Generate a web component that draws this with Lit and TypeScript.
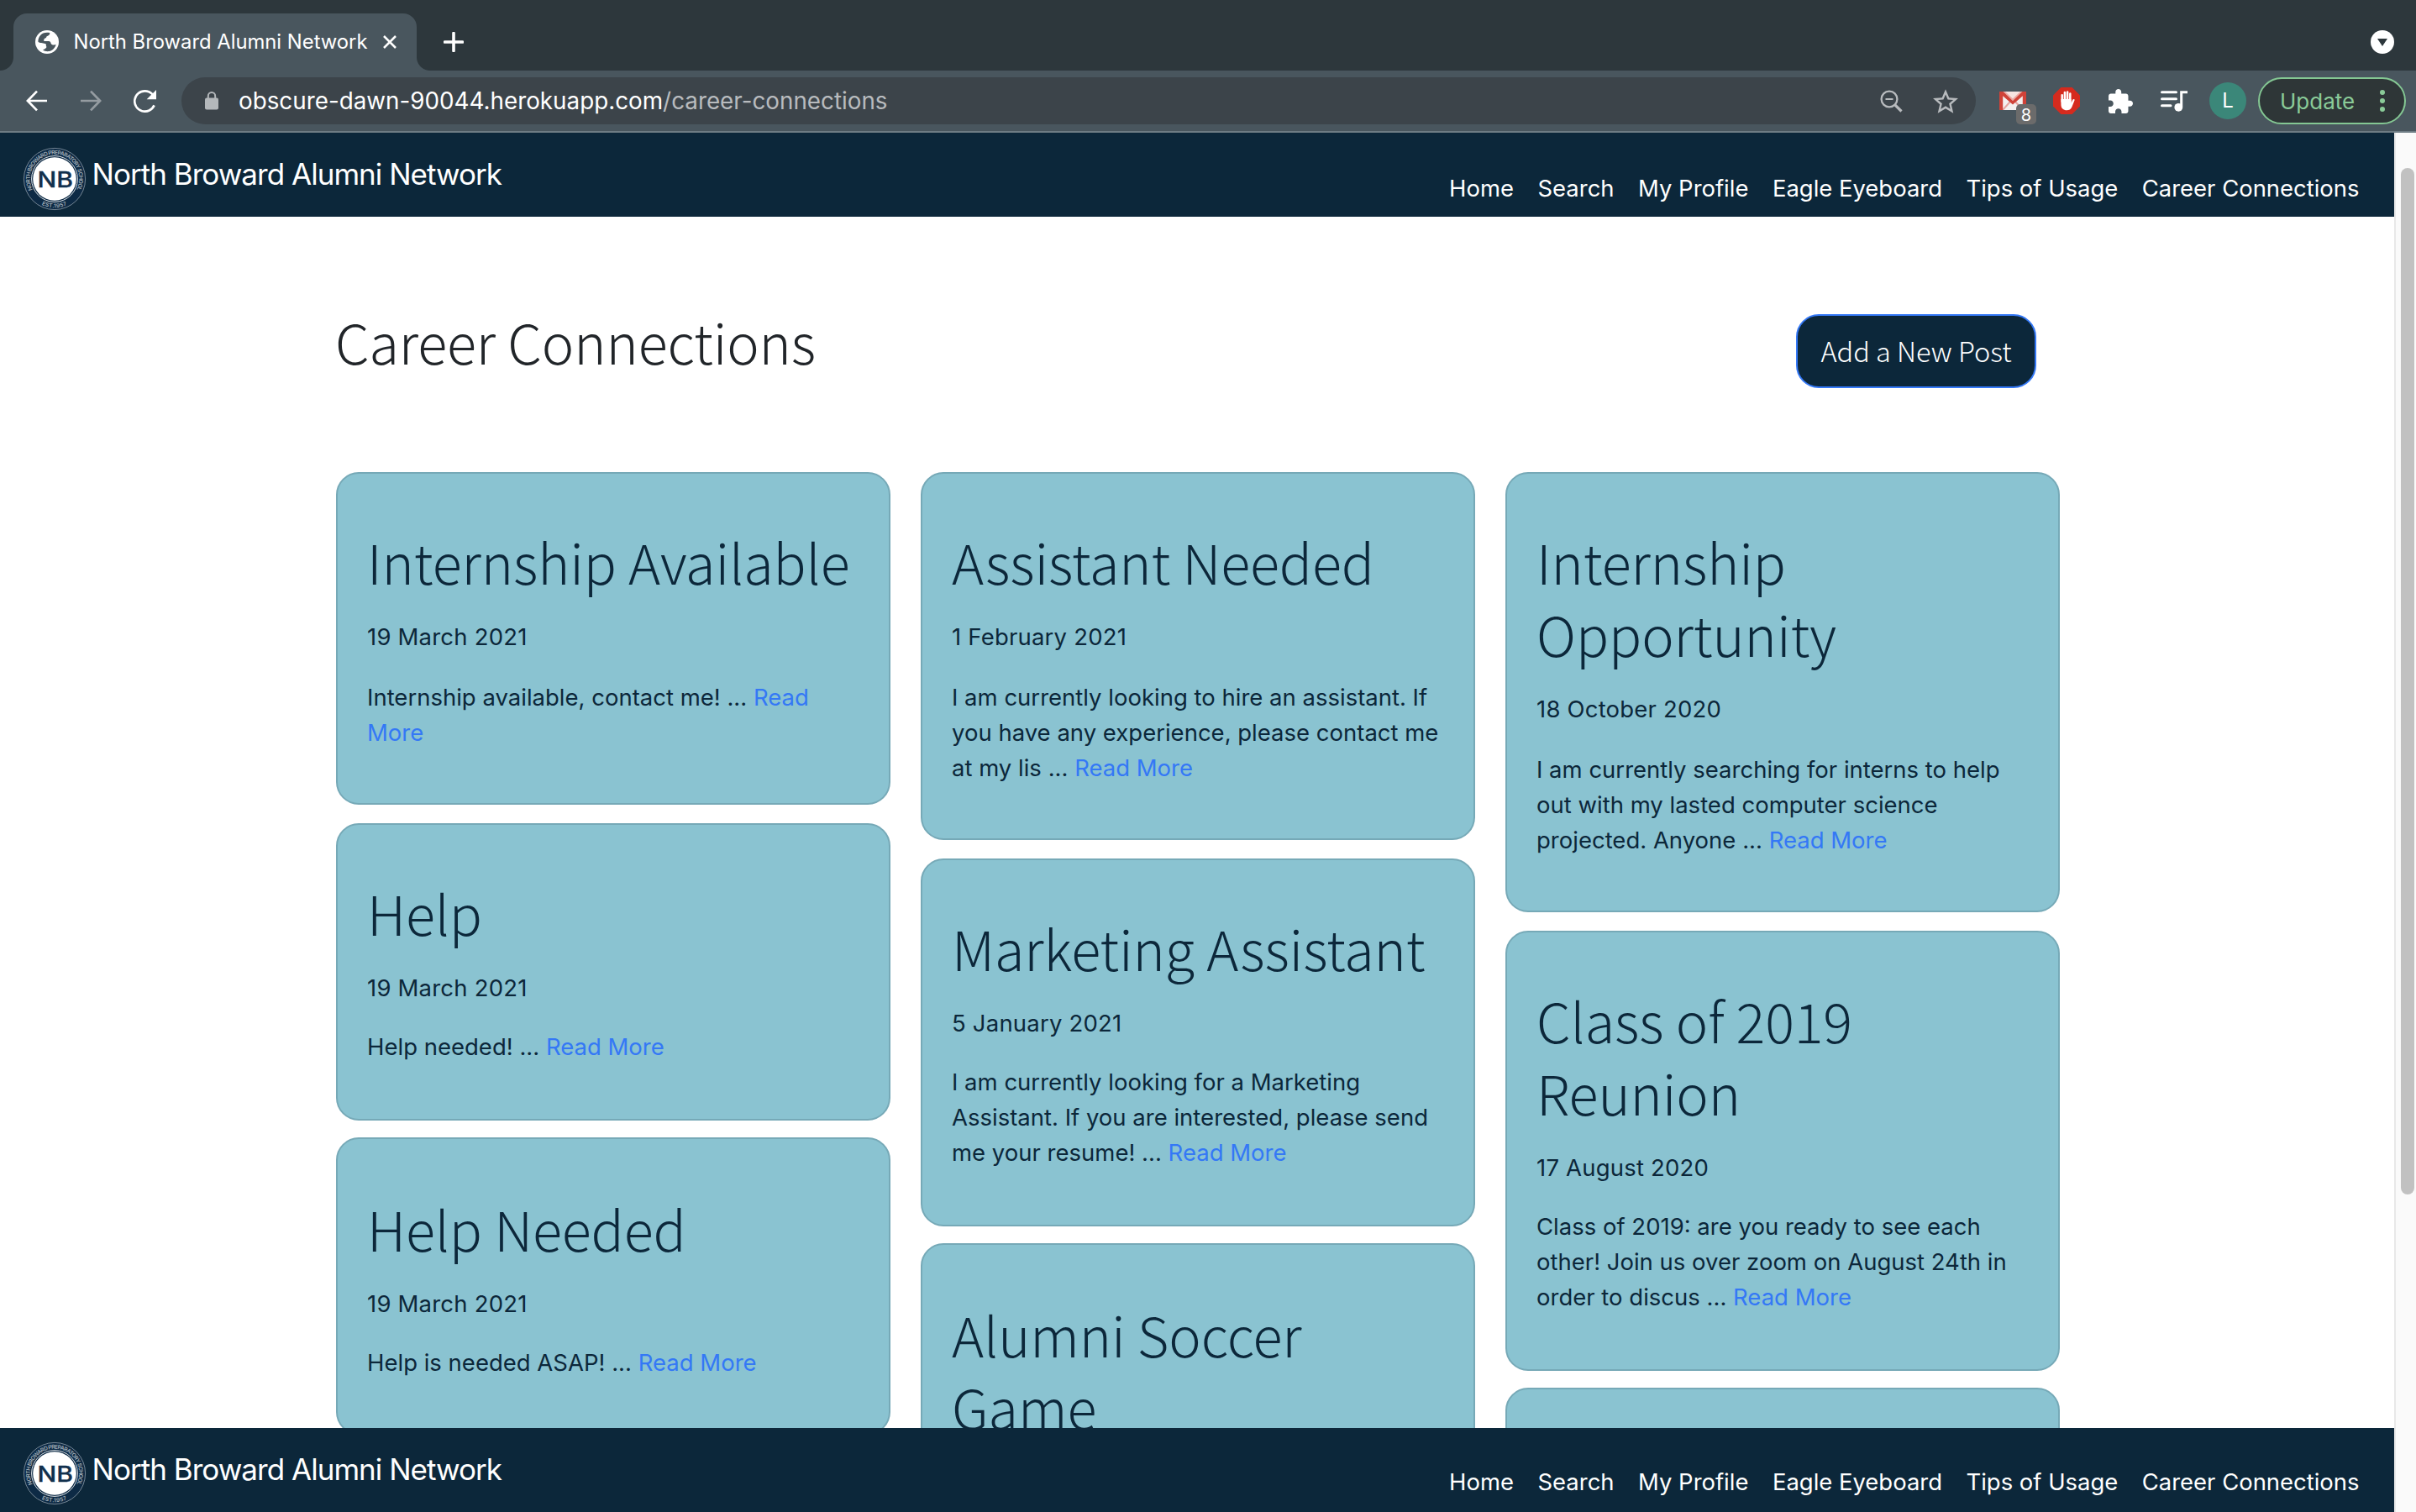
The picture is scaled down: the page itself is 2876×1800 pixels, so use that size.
import { LitElement, html, css, svg, nothing } from "lit";
import { customElement, property } from "lit/decorators.js";

interface Post {
  title: string;
  date?: string;
  excerpt?: string;
}

const SITE_NAME = "North Broward Alumni Network";

const NAV_LINKS = ["Home", "Search", "My Profile", "Eagle Eyeboard", "Tips of Usage", "Career Connections"];

const COLUMNS: Post[][] = [
  [
    { title: "Internship Available", date: "19 March 2021", excerpt: "Internship available, contact me!" },
    { title: "Help", date: "19 March 2021", excerpt: "Help needed!" },
    { title: "Help Needed", date: "19 March 2021", excerpt: "Help is needed ASAP!" },
  ],
  [
    {
      title: "Assistant Needed",
      date: "1 February 2021",
      excerpt: "I am currently looking to hire an assistant. If you have any experience, please contact me at my lis",
    },
    {
      title: "Marketing Assistant",
      date: "5 January 2021",
      excerpt: "I am currently looking for a Marketing Assistant. If you are interested, please send me your resume!",
    },
    { title: "Alumni Soccer Game" },
  ],
  [
    {
      title: "Internship Opportunity",
      date: "18 October 2020",
      excerpt: "I am currently searching for interns to help out with my lasted computer science projected. Anyone",
    },
    {
      title: "Class of 2019 Reunion",
      date: "17 August 2020",
      excerpt: "Class of 2019: are you ready to see each other! Join us over zoom on August 24th in order to discus",
    },
    { title: "" },
  ],
];

@customElement("school-seal")
export class SchoolSeal extends LitElement {
  static styles = css`
    :host {
      display: block;
      width: 76px;
      height: 76px;
    }
    svg {
      display: block;
    }
    .ring-text {
      font: 600 6.6px Inter, "Liberation Sans", sans-serif;
      fill: #a3afb9;
    }
    .initials {
      font: 500 25.5px Inter, "Liberation Sans", sans-serif;
      fill: #12304d;
      stroke: #12304d;
      stroke-width: 0.3px;
    }
  `;

  render() {
    return html`<svg width="76" height="76" viewBox="-38 -38 76 76">
      <defs>
        <path id="upper" d="M-26.2 12.8A29.2 29.2 0 1 1 26.2 12.8" />
        <path id="lower" d="M-15.5 30.6A34.3 34.3 0 0 0 15.5 30.6" />
      </defs>
      <circle r="36.6" fill="#0d2a45" stroke="#7f8f9c" stroke-width="0.9" />
      <text class="ring-text">
        <textPath href="#upper" textLength="118">NORTH BROWARD PREPARATORY SCHOOL</textPath>
      </text>
      <text class="ring-text">
        <textPath href="#lower" textLength="31">EST.1957</textPath>
      </text>
      <circle r="27.4" fill="none" stroke="#dfe4e8" stroke-width="1" />
      <circle r="25.8" fill="#fff" />
      <text class="initials" x="-20.6" y="9.6" textLength="42.5" lengthAdjust="spacingAndGlyphs">NB</text>
    </svg>`;
  }
}

@customElement("site-bar")
export class SiteBar extends LitElement {
  static styles = css`
    :host {
      display: flex;
      box-sizing: border-box;
      height: 100px;
      flex: none;
      padding: 0 41.5px 0 27px;
      background: #0c273a;
      color: #fff;
      font-family: Inter, "Liberation Sans", sans-serif;
    }
    .seal {
      margin-top: 17px;
    }
    :host([placement="bottom"]) .seal {
      margin-top: 16px;
    }
    .brand {
      margin: 24px auto 0 6.5px;
      font-size: 35px;
      line-height: 50px;
      letter-spacing: -0.97px;
      white-space: nowrap;
    }
    .links {
      display: flex;
      gap: 28.5px;
      margin-top: 45px;
      font-size: 27.45px;
      line-height: 42px;
      white-space: nowrap;
    }
    :host([placement="bottom"]) .links {
      margin-top: 43px;
    }
  `;

  @property({ reflect: true }) placement = "top";

  render() {
    return html`
      <school-seal class="seal"></school-seal>
      <span class="brand">${SITE_NAME}</span>
      <nav class="links">${NAV_LINKS.map((link) => html`<span>${link}</span>`)}</nav>
    `;
  }
}

@customElement("post-card")
export class PostCard extends LitElement {
  static styles = css`
    :host {
      display: block;
      box-sizing: border-box;
      width: 660px;
      min-height: 354px;
      padding: 61px 33px 63px 35px;
      border: 2px solid #76a9b7;
      border-radius: 27px;
      background: #8ac3d1;
      color: #0c273a;
    }
    .title {
      margin: 0;
      min-height: 86px;
      font: 300 64.8px/86px "Noto Sans CJK JP", "Noto Sans", sans-serif;
      letter-spacing: -0.08px;
    }
    .date,
    .text {
      margin: 26px 0 0;
      font: 27.5px/42px Inter, "Liberation Sans", sans-serif;
    }
    .date {
      letter-spacing: 0.2px;
    }
    .text {
      margin-top: var(--text-gap, 30px);
    }
    .more {
      color: #3478f6;
    }
  `;

  @property({ attribute: false }) post!: Post;

  render() {
    const { title, date, excerpt } = this.post;
    return html`
      ${title ? html`<h2 class="title">${title}</h2>` : nothing}
      ${date ? html`<p class="date">${date}</p>` : nothing}
      ${excerpt ? html`<p class="text">${excerpt} ... <span class="more">Read More</span></p>` : nothing}
    `;
  }
}

const arrow = svg`<path d="M25 13H2.4M13 1.6 1.9 13 13 24.4" fill="none" stroke="currentColor" stroke-width="2.7" />`;

@customElement("browser-chrome")
export class BrowserChrome extends LitElement {
  static styles = css`
    :host {
      display: block;
      flex: none;
      color: #fff;
      font-family: Inter, "Liberation Sans", sans-serif;
    }
    svg {
      display: block;
      flex: none;
    }
    .strip {
      display: flex;
      align-items: flex-start;
      box-sizing: border-box;
      height: 84px;
      padding: 16px 26px 0 16px;
      background: #2d373c;
    }
    .tab {
      position: relative;
      display: flex;
      align-items: center;
      box-sizing: border-box;
      width: 480px;
      height: 68px;
      padding: 0 24px 0 26px;
      border-radius: 16px 16px 0 0;
      background: #49565e;
    }
    .tab::before,
    .tab::after {
      content: "";
      position: absolute;
      bottom: 0;
      width: 16px;
      height: 16px;
    }
    .tab::before {
      right: 100%;
      background: radial-gradient(circle at 0 0, transparent 15.5px, #49565e 16.5px);
    }
    .tab::after {
      left: 100%;
      background: radial-gradient(circle at 100% 0, transparent 15.5px, #49565e 16.5px);
    }
    .tab-title {
      margin: 0 auto 0 17.5px;
      font-size: 23.8px;
      line-height: 30px;
      white-space: nowrap;
    }
    .plus {
      margin: 22px auto 0 32px;
    }
    .menu {
      margin-top: 20px;
    }
    .toolbar {
      display: flex;
      align-items: center;
      box-sizing: border-box;
      height: 74px;
      padding: 0 11px 0 31px;
      border-bottom: 2px solid #6e7c84;
      background: #49565e;
    }
    .forward {
      margin-left: 38px;
      transform: scaleX(-1);
      color: #959ca1;
    }
    .reload {
      margin-left: 38px;
    }
    .address {
      display: flex;
      align-items: center;
      box-sizing: border-box;
      width: 2136px;
      height: 56px;
      margin-left: 30px;
      padding: 0 21px 0 28px;
      border-radius: 28px;
      background: #3c444a;
      color: #b8bbbe;
    }
    .url {
      margin: 0 auto 0 24px;
      font-size: 27.8px;
      line-height: 40px;
      white-space: nowrap;
    }
    .host {
      color: #fff;
    }
    .star {
      margin-left: 36px;
    }
    .mail {
      position: relative;
      margin-left: 28px;
    }
    .count {
      position: absolute;
      left: 20px;
      top: 15px;
      width: 24px;
      height: 24px;
      border-radius: 5px;
      background: #6b6b6b;
      font-size: 20px;
      line-height: 26px;
      text-align: center;
    }
    .blocker {
      margin-left: 32px;
    }
    .puzzle {
      margin-left: 34px;
    }
    .queue {
      margin-left: 33px;
    }
    .avatar {
      width: 44px;
      height: 44px;
      margin-left: 26px;
      border-radius: 50%;
      background: #3b8779;
      font-size: 24px;
      line-height: 44px;
      text-align: center;
    }
    .update {
      display: flex;
      align-items: center;
      justify-content: space-between;
      box-sizing: border-box;
      width: 176px;
      height: 56px;
      margin-left: 14px;
      padding: 0 23px 0 24px;
      border: 2px solid #84c793;
      border-radius: 28px;
      background: #2e3637;
      color: #8acb98;
      font-size: 26px;
    }
  `;

  render() {
    return html`
      <div class="strip">
        <div class="tab">
          <svg width="28" height="28" viewBox="0 0 28 28">
            <circle cx="14" cy="14" r="14" fill="#fff" />
            <path
              d="M9.5 3.6C11.500 2.700 14.500 2.500 17.200 3.100 17.800 5 16.200 6.700 13.600 7.300 13.200 8.900 12.500 9.500 10.800 10 10.200 11 10.300 12 10.300 13H16C17.800 13.200 18.500 14.300 18.700 16 20 17.600 22.500 17.900 24.600 17 23.700 21 20.500 24.300 16.500 25.100 13.500 25.500 11 24.800 9 23.600 11 22.500 12.800 21.500 13.600 19.700 12 19.300 13.700 17.500 12.600 16.600 10.500 14.800 6.500 16 3.500 14 3.100 9.500 5.600 5.500 9.500 3.600Z"
              fill="#49565e"
            />
          </svg>
          <span class="tab-title">${SITE_NAME}</span>
          <svg width="16" height="16" viewBox="0 0 16 16">
            <path d="M1 1 15 15M15 1 1 15" stroke="#fff" stroke-width="2.5" />
          </svg>
        </div>
        <svg class="plus" width="24" height="24" viewBox="0 0 24 24">
          <path d="M12 1.500V22.500M1.500 12H22.500" stroke="#fff" stroke-width="3.600" stroke-linecap="round" />
        </svg>
        <svg class="menu" width="28" height="28" viewBox="0 0 28 28">
          <circle cx="14" cy="14" r="14" fill="#fff" />
          <path d="M8 10H20L14 19Z" fill="#2d373c" />
        </svg>
      </div>
      <div class="toolbar">
        <svg width="26" height="26" viewBox="0 0 26 26">${arrow}</svg>
        <svg class="forward" width="26" height="26" viewBox="0 0 26 26">${arrow}</svg>
        <svg class="reload" width="27" height="27" viewBox="4 4 16 16" fill="#fff">
          <path
            d="M17.650 6.350A7.960 7.960 0 0 0 12 4a8 8 0 1 0 7.300 11.200l-1.500-.7A6.400 6.400 0 1 1 12 5.600c1.760 0 3.340.72 4.500 1.880L13.300 10.600H20V4z"
          />
        </svg>
        <div class="address">
          <svg width="16" height="22" viewBox="0 0 16 22">
            <rect x="0" y="7.500" width="16" height="14" rx="2" fill="#b4b8bb" />
            <path d="M3.800 8.500V5.300a4.200 4.200 0 0 1 8.400 0V8.500" fill="none" stroke="#b4b8bb" stroke-width="2" />
          </svg>
          <span class="url"><span class="host">obscure-dawn-90044.herokuapp.com</span>/career-connections</span>
          <svg width="27" height="27" viewBox="0 0 27 27" fill="none" stroke="currentColor">
            <circle cx="11" cy="11" r="9.400" stroke-width="2.300" />
            <path d="M6.500 11H15.500" stroke-width="2" />
            <path d="M17.800 17.800 25.500 25.500" stroke-width="3.200" />
          </svg>
          <svg class="star" width="30" height="29" viewBox="2 2 20 19" fill="currentColor">
            <path
              d="M22 9.240l-7.190-.62L12 2 9.190 8.630 2 9.240l5.460 4.730L5.820 21 12 17.270 18.180 21l-1.630-7.030L22 9.240zM12 15.400l-3.760 2.270 1-4.280-3.320-2.880 4.380-.38L12 6.100l1.710 4.040 4.380.38-3.320 2.880 1 4.280L12 15.400z"
            />
          </svg>
        </div>
        <div class="mail">
          <svg width="32" height="22" viewBox="0 0 32 22">
            <rect width="32" height="22" rx="1" fill="#f4f0ef" />
            <path d="M4 22 13 12M28 22 19 12" stroke="#e6a5a0" stroke-width="2" />
            <path d="M4 0H28L16 11Z" fill="#eda9a4" />
            <path d="M7 0H25L16 8.500Z" fill="#f7e3e1" />
            <path d="M0 0H4.500L16 11 27.500 0H32V22H27.800V5.200L16 15.500 4.200 5.200V22H0Z" fill="#d04238" />
          </svg>
          <span class="count">8</span>
        </div>
        <svg class="blocker" width="32" height="32" viewBox="0 0 32 32">
          <path d="M9.400 0H22.600L32 9.400V22.600L22.600 32H9.400L0 22.600V9.400Z" fill="#d52b1e" />
          <g stroke="#fff" stroke-width="2.500" stroke-linecap="round">
            <path d="M10.700 17V9.300M13.900 16V6M17.100 16V5.500M20.300 17V7.500" />
          </g>
          <path
            d="M9.450 14H21.550V18.500L23.500 14.600C24.200 13.600 25.900 14 25.500 15.400L22.300 23.500C21 26.300 19 27.300 16.300 27.300 12.400 27.300 9.450 25 9.450 20.500Z"
            fill="#fff"
          />
        </svg>
        <svg class="puzzle" width="29" height="29" viewBox="2 1 21 21" fill="#fff">
          <path
            d="M20.500 11H19V7c0-1.100-.9-2-2-2h-4V3.500C13 2.120 11.880 1 10.500 1S8 2.120 8 3.500V5H4c-1.100 0-1.990.9-1.990 2v3.800H3.500c1.490 0 2.700 1.210 2.700 2.700s-1.210 2.700-2.700 2.700H2V20c0 1.100.9 2 2 2h3.800v-1.500c0-1.490 1.210-2.700 2.700-2.700 1.490 0 2.700 1.210 2.700 2.700V22H17c1.100 0 2-.9 2-2v-4h1.500c1.380 0 2.500-1.120 2.500-2.500S21.880 11 20.500 11z"
          />
        </svg>
        <svg class="queue" width="32" height="25" viewBox="0 0 32 25">
          <path d="M1.500 1.700H18.500M1.500 9.700H18.500M1.500 17.700H12" stroke="#fff" stroke-width="3" stroke-linecap="round" />
          <path d="M24.700 19.500V1.700H32" fill="none" stroke="#fff" stroke-width="3" />
          <circle cx="21.300" cy="19.800" r="4.900" fill="#fff" />
        </svg>
        <div class="avatar">L</div>
        <div class="update">
          <span>Update</span>
          <svg width="6" height="28" viewBox="0 0 6 28" fill="currentColor">
            <circle cx="3" cy="4" r="3" />
            <circle cx="3" cy="14" r="3" />
            <circle cx="3" cy="24" r="3" />
          </svg>
        </div>
      </div>
    `;
  }
}

@customElement("app-root")
export class AppRoot extends LitElement {
  static styles = css`
    :host {
      display: flex;
      flex-direction: column;
      width: 2876px;
      height: 1800px;
      overflow: hidden;
      background: #fff;
    }
    .viewport {
      display: flex;
      flex: 1;
      min-height: 0;
    }
    .page {
      display: flex;
      flex-direction: column;
      width: 2850px;
    }
    .content {
      flex: 1;
      min-height: 0;
      overflow: hidden;
      padding: 0 398px 0 400px;
    }
    .heading-row {
      display: flex;
      justify-content: space-between;
      align-items: flex-start;
      height: 304px;
      padding-right: 28px;
    }
    .heading {
      margin: 105px 0 0 -1px;
      color: #212529;
      font: 300 64.8px/86px "Noto Sans CJK JP", "Noto Sans", sans-serif;
      letter-spacing: -0.1px;
    }
    .add {
      box-sizing: border-box;
      width: 286px;
      height: 88px;
      margin: 116px 0 0;
      padding: 0 0 3px;
      border: 2px solid #3478f6;
      border-radius: 27px;
      background: #0c273a;
      color: #fff;
      font: 300 32.5px/81px "Noto Sans CJK JP", "Noto Sans", sans-serif;
      text-align: center;
    }
    .columns {
      display: flex;
      gap: 36px;
      align-items: flex-start;
    }
    .column {
      display: flex;
      flex-direction: column;
      width: 660px;
    }
    .card:nth-child(2) {
      margin-top: 22px;
      padding-bottom: 65px;
      --text-gap: 28px;
    }
    .card:nth-child(3) {
      margin-top: 20px;
      padding-top: 63px;
      --text-gap: 28px;
    }
    .scrollbar {
      box-sizing: border-box;
      width: 26px;
      padding: 42px 2px 0 6px;
      border-left: 2px solid #e8e8e8;
      background: #fafafa;
    }
    .thumb {
      width: 16px;
      height: 1222px;
      border-radius: 8px;
      background: #c1c1c1;
    }
  `;

  render() {
    return html`
      <browser-chrome></browser-chrome>
      <div class="viewport">
        <div class="page">
          <site-bar placement="top"></site-bar>
          <main class="content">
            <div class="heading-row">
              <h1 class="heading">Career Connections</h1>
              <button class="add">Add a New Post</button>
            </div>
            <div class="columns">
              ${COLUMNS.map(
                (posts) => html`<div class="column">
                  ${posts.map((post) => html`<post-card class="card" .post=${post}></post-card>`)}
                </div>`
              )}
            </div>
          </main>
          <site-bar placement="bottom"></site-bar>
        </div>
        <div class="scrollbar"><div class="thumb"></div></div>
      </div>
    `;
  }
}
